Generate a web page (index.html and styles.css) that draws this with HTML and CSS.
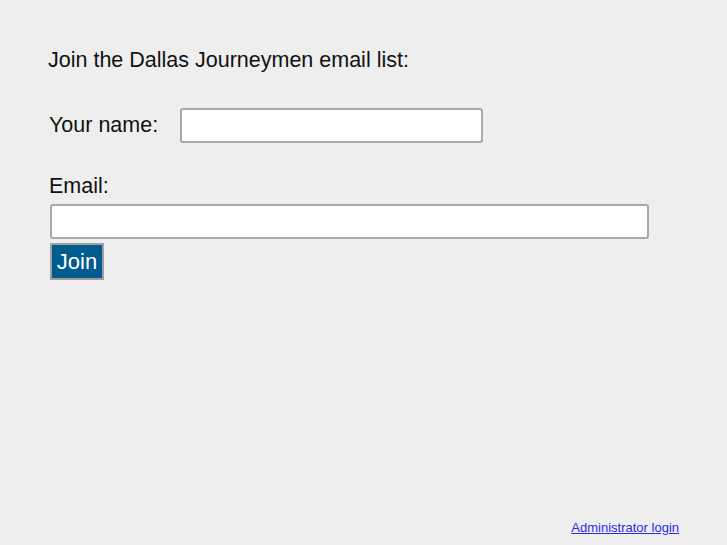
FILE: index.html
```html
<!DOCTYPE html>
<html>
<head>
<meta charset="utf-8">
<link rel="stylesheet" href="styles.css">
</head>
<body>
<div class="page">
  <form class="signup">
    <p class="intro">Join the Dallas Journeymen email list:</p>
    <div class="name-row">
      <label class="label" for="name">Your name:</label>
      <input class="field name-field" id="name" type="text">
    </div>
    <label class="label email-label" for="email">Email:</label>
    <input class="field email-field" id="email" type="text">
    <button class="join" type="button">Join</button>
  </form>
  <div class="footer">
    <a class="admin" href="#">Administrator login</a>
  </div>
</div>
</body>
</html>
```

FILE: styles.css
```css
html, body {
  margin: 0;
  padding: 0;
  background: #eeeeee;
}
body {
  font-family: "Liberation Sans", Arial, sans-serif;
  color: #111;
}
.page {
  height: 545px;
  box-sizing: border-box;
  display: flex;
  flex-direction: column;
  padding: 48px 48px 0 48px;
}
.signup {
  display: flex;
  flex-direction: column;
  align-items: flex-start;
}
.intro {
  margin: 0;
  font-size: 21.5px;
  line-height: 25px;
}
.name-row {
  display: flex;
  align-items: center;
  margin-top: 35px;
  padding-left: 1px;
}
.label {
  font-size: 21.5px;
  line-height: 25px;
}
.field {
  box-sizing: border-box;
  background: #fff;
  border: 2px solid #a8a8a8;
  border-radius: 3px;
  height: 35px;
  margin: 0;
  font-size: 16px;
}
.name-field {
  width: 303px;
  margin-left: 22px;
}
.email-label {
  margin-top: 31px;
  padding-left: 1px;
}
.email-field {
  width: 599px;
  margin-top: 5px;
  margin-left: 2px;
}
.join {
  margin: 4px 0 0 2px;
  height: 37px;
  width: 54px;
  padding: 0;
  background: #005b8f;
  color: #fff;
  border: 2px solid #a0a0a0;
  font-family: "Liberation Sans", Arial, sans-serif;
  font-size: 22px;
}
.footer {
  margin-top: auto;
  display: flex;
  justify-content: flex-end;
  padding-bottom: 10px;
}
.admin {
  font-size: 13px;
  color: #2a2aee;
}
```
